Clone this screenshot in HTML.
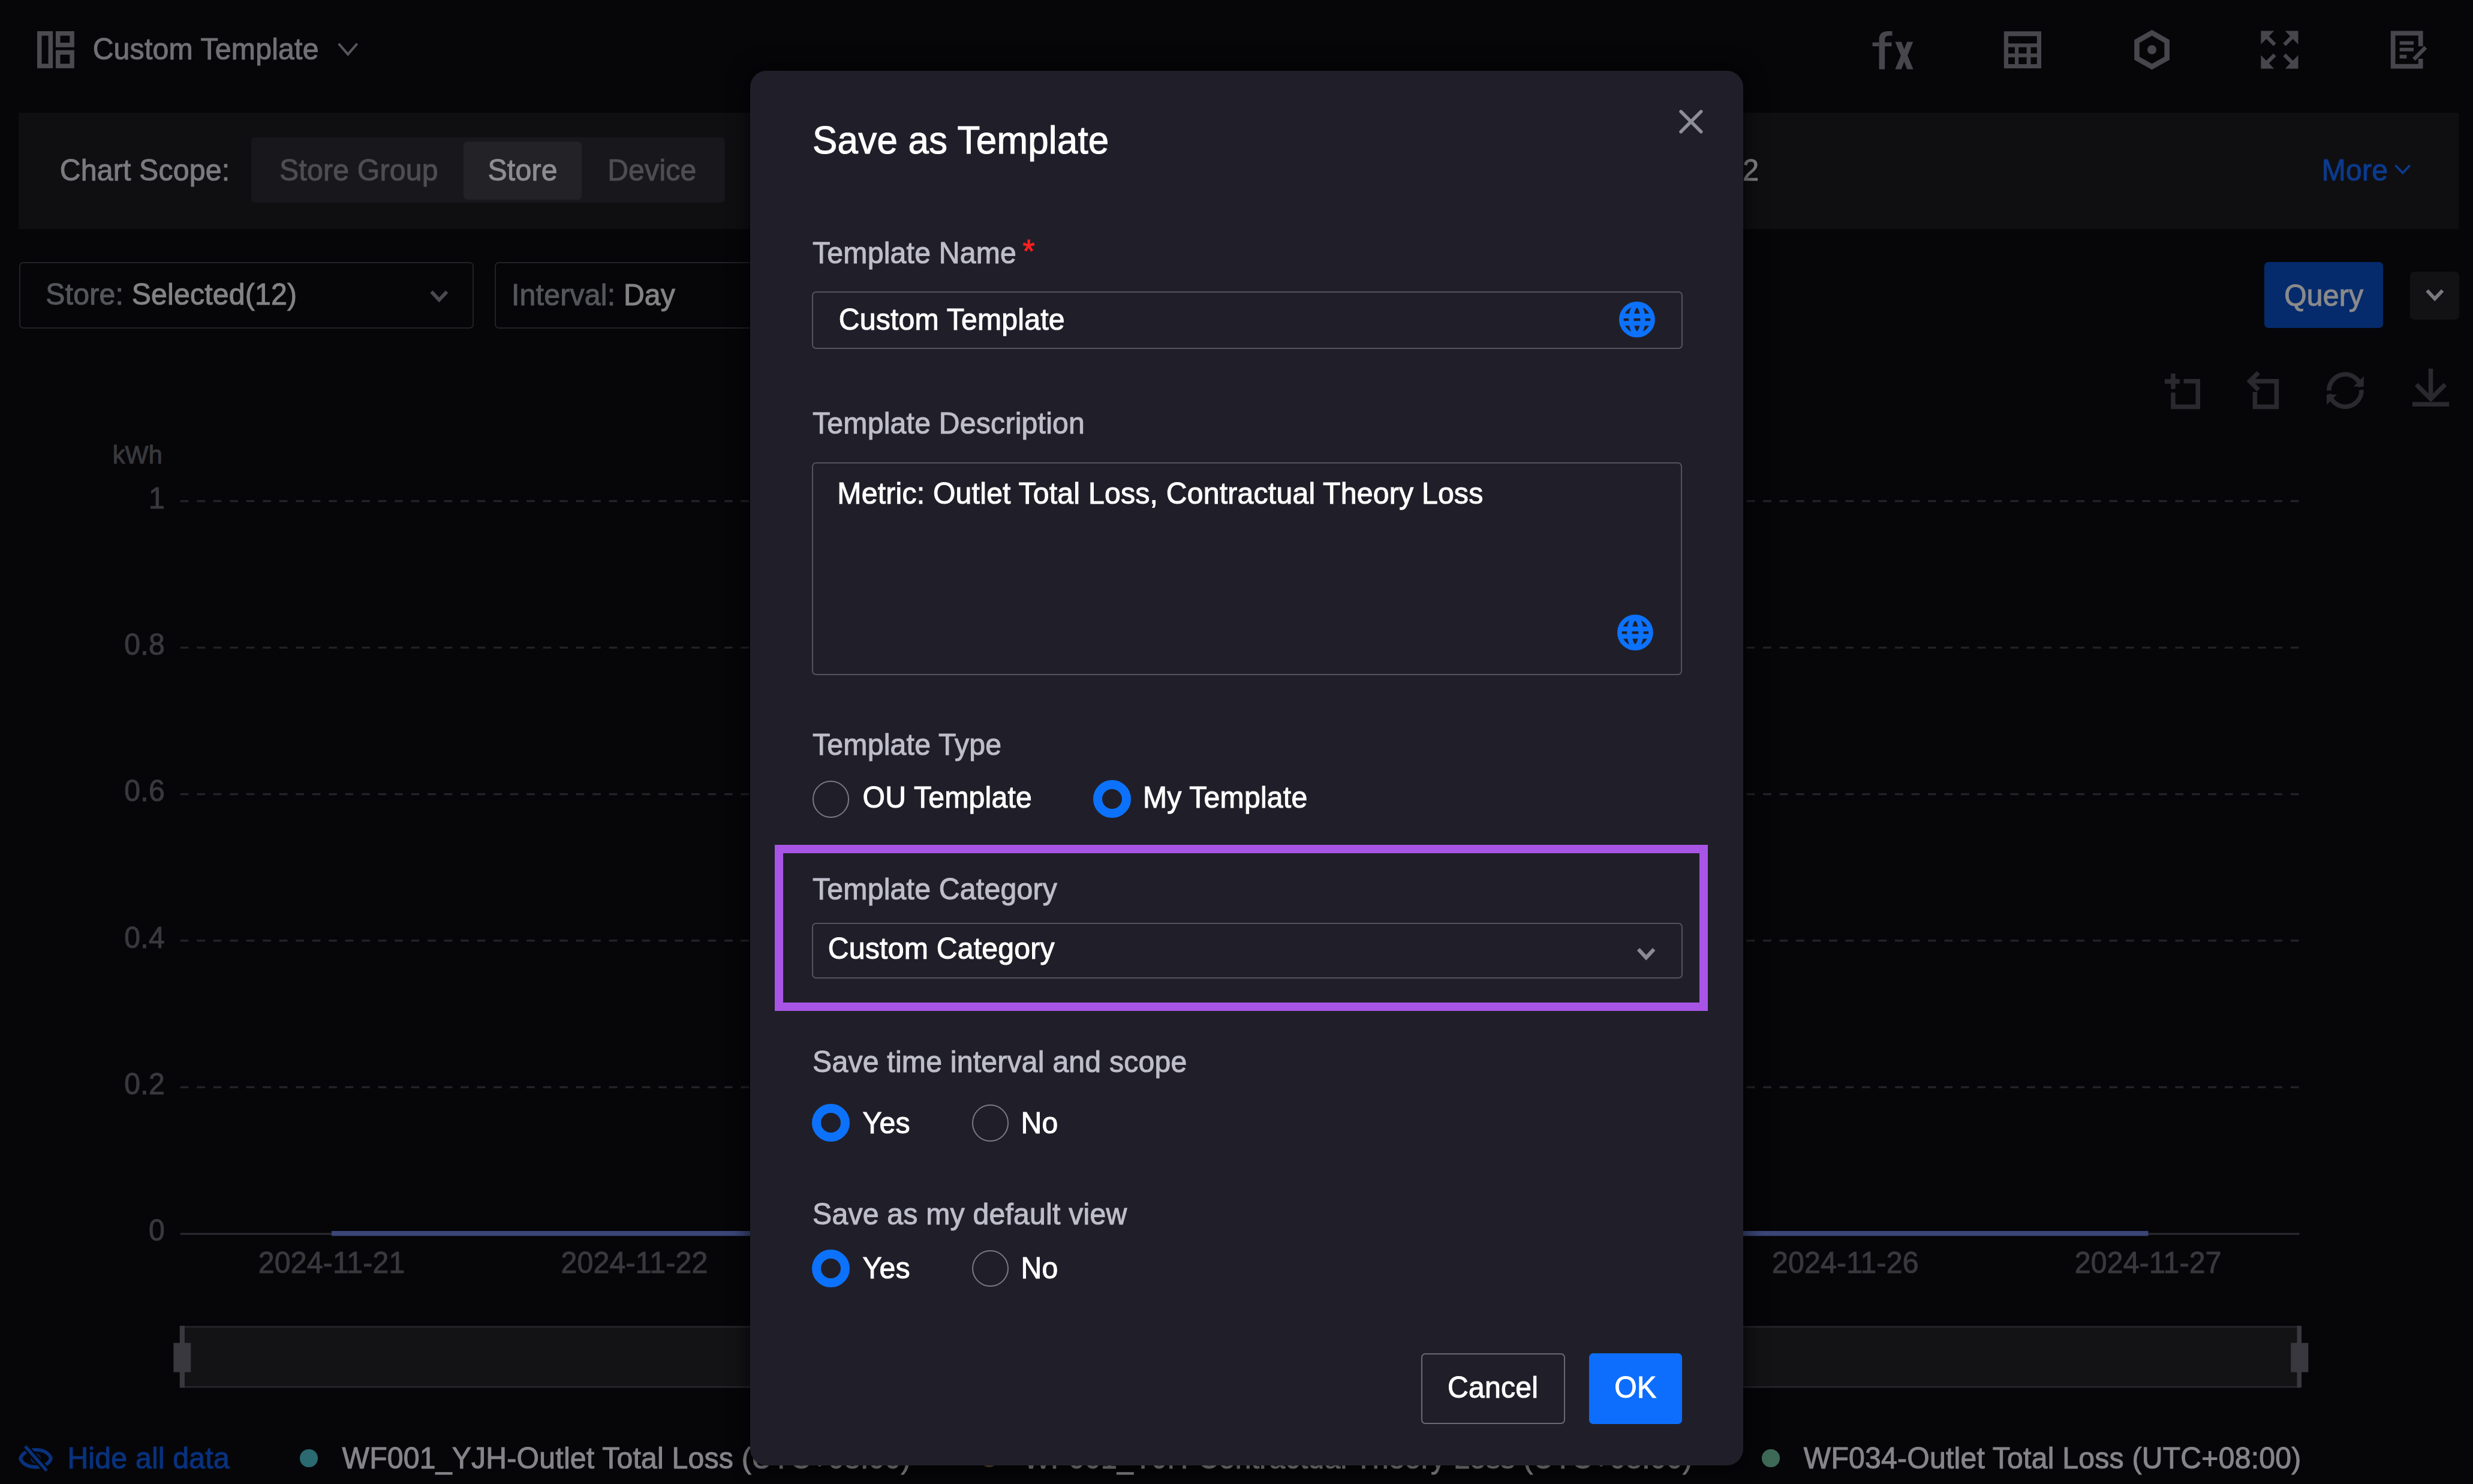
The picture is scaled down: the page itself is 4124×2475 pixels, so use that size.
<!DOCTYPE html>
<html><head><meta charset="utf-8">
<style>
html,body{margin:0;padding:0;background:#060609;overflow:hidden;width:4124px;height:2475px;}
#app{zoom:3.43667;position:relative;width:1200px;height:720px;overflow:hidden;background:#060609;font-family:"Liberation Sans",sans-serif;font-size:14px;line-height:14px;}
.a{position:absolute;white-space:nowrap;}
.t{transform:scaleY(1.05);transform-origin:0 0.8465em;-webkit-text-stroke:0.3px currentColor;letter-spacing:0.07px;}
svg{position:absolute;overflow:visible;}
</style></head>
<body><div id="app">

<!-- ===== Top bar ===== -->
<svg style="left:18px;top:15px" width="18" height="18" viewBox="0 0 18 18" fill="none" stroke="#4a4a4f" stroke-width="2.2">
  <rect x="1.1" y="1.1" width="5.4" height="15.8"/><rect x="10.1" y="1.1" width="6.8" height="5.6"/><rect x="10.1" y="10.3" width="6.8" height="6.6"/>
</svg>
<div class="a t" style="left:45px;top:16.9px;color:#707074">Custom Template</div>
<svg style="left:163.8px;top:20.4px" width="10" height="7" viewBox="0 0 10 7" fill="none" stroke="#55555a" stroke-width="1.2"><path d="M0.5 0.8 L5 6 L9.5 0.8"/></svg>

<!-- top-right icons -->

<!-- ===== Filter panel ===== -->
<div class="a" style="left:9px;top:54.6px;width:1184px;height:56.6px;background:#0f0f12"></div>
<div class="a t" style="left:29px;top:75.6px;color:#7b7b7f">Chart Scope:</div>
<div class="a" style="left:121.8px;top:66.6px;width:230px;height:31.8px;background:#18181c;border-radius:2px"></div>
<div class="a" style="left:225px;top:68.7px;width:57.3px;height:28.2px;background:#222227;border-radius:2px"></div>
<div class="a t" style="left:135.6px;top:75.6px;color:#4d4d52">Store Group</div>
<div class="a t" style="left:236.7px;top:75.6px;color:#8d8d91">Store</div>
<div class="a t" style="left:294.8px;top:75.6px;color:#4d4d52">Device</div>
<div class="a t" style="left:837.8px;top:75.6px;color:#848486">12</div>
<div class="a t" style="left:1126.6px;top:75.6px;color:#0c3a8c">More</div>
<svg style="left:1162px;top:79.7px" width="8" height="5" viewBox="0 0 8 5" fill="none" stroke="#0c3a8c" stroke-width="1.1"><path d="M0.5 0.5 L4 4.2 L7.5 0.5"/></svg>

<!-- ===== Selects row ===== -->
<div class="a" style="left:9.3px;top:127.3px;width:219.30px;height:30.90px;border:0.70px solid #222226;border-radius:2px"></div>
<div class="a t" style="left:22.2px;top:135.9px;color:#54565b">Store: <span style="color:#838384">Selected(12)</span></div>
<svg style="left:208.3px;top:140.4px" width="9.5" height="6.3" viewBox="0 0 9.5 6.3" fill="none" stroke="#4a4a4f" stroke-width="1.7"><path d="M1 1 L4.75 5 L8.5 1"/></svg>
<div class="a" style="left:240px;top:127.3px;width:200.60px;height:30.90px;border:0.70px solid #222226;border-radius:2px"></div>
<div class="a t" style="left:248.2px;top:136.1px;color:#54565b">Interval: <span style="color:#838384">Day</span></div>

<div class="a" style="left:1098.6px;top:127.3px;width:57.9px;height:31.9px;background:#052b6c;border-radius:2px"></div>
<div class="a t" style="left:1108.4px;top:136.6px;color:#8a8a8c">Query</div>
<div class="a" style="left:1169.5px;top:131.7px;width:23.7px;height:23.5px;background:#121215;border-radius:2px"></div>
<svg style="left:1176.6px;top:140px" width="9.5" height="6.3" viewBox="0 0 9.5 6.3" fill="none" stroke="#7a7a7e" stroke-width="1.7"><path d="M1 1 L4.75 5 L8.5 1"/></svg>

<!-- top-right icons -->
<svg style="left:0;top:0" width="1200" height="720" viewBox="0 0 1200 720">
 <g fill="#47464d">
  <!-- fx -->
  <path d="M911.8 33.6 V20.6 H908.6 V22.5 H911.8 Z"/>
  <path d="M911.8 33.6 H914.6 V22.5 H917.9 V20.6 H914.6 V19.2 Q914.6 17.3 916.4 17.3 H918.2 V15.1 H916.2 Q911.8 15.1 911.8 19.2 Z"/>
  <path d="M919.6 20.3 H922.6 L924 23.9 L925.4 20.3 H928.3 L925.6 26.9 L928.4 33.6 H925.4 L924 29.9 L922.6 33.6 H919.6 L922.4 26.9 Z"/>
  <!-- calculator -->
  <path fill-rule="evenodd" d="M972.4 15.2 H990.5 V33.2 H972.4 Z M974.5 17.5 V21.1 H988.4 V17.5 Z M974.5 22.9 V26 H977.7 V22.9 Z M979.5 22.9 V26 H983.4 V22.9 Z M985.4 22.9 V26 H988.4 V22.9 Z M974.5 27.8 V31.1 H977.7 V27.8 Z M979.5 27.8 V31.1 H983.4 V27.8 Z M985.4 27.8 V31.1 H988.4 V27.8 Z"/>
  <!-- hexagon dot -->
  <circle cx="1044.2" cy="24.1" r="2.2"/>
  <!-- expand arrows -->
  <path d="M1097.1 15 H1103.5 L1097.1 21.5 Z"/><path d="M1115.2 15 H1108.8 L1115.2 21.5 Z"/>
  <path d="M1097.1 33.3 H1103.5 L1097.1 26.8 Z"/><path d="M1115.2 33.3 H1108.8 L1115.2 26.8 Z"/>
  <!-- edit doc lines -->
  <rect x="1164.4" y="20" width="6.8" height="1.7"/>
  <rect x="1164.4" y="23.2" width="6.8" height="1.7"/>
  <rect x="1164.4" y="26.6" width="3.4" height="1.8"/>
 </g>
 <g fill="none" stroke="#47464d">
  <path stroke-width="2.5" d="M1044.2 15.9 L1051.5 20.1 V28.3 L1044.2 32.4 L1036.9 28.3 V20.1 Z"/>
  <path stroke-width="2.26" d="M1174.6 22.5 V16.1 H1161.2 V32.2 H1174.6 V28.5"/>
  <path stroke-width="1.9" d="M1171.3 28.8 L1177 23"/>
  <path stroke-width="1.85" d="M1099.3 17.2 L1103.8 21.7 M1113 17.2 L1108.5 21.7 M1099.3 31.1 L1103.8 26.6 M1113 31.1 L1108.5 26.6"/>
 </g>
 <!-- toolbar icons -->
 <g fill="none" stroke="#29292e" stroke-width="2.2">
  <path d="M1054.5 181.3 V188.8 M1050.4 185.1 H1057.7"/>
  <path d="M1059.6 185 H1066.5 V197.4 H1054.5 V190.5"/>
  <path d="M1091.5 185 H1104.7 V197.4 H1094.2 V190.2"/>
  <path d="M1095.9 180.8 L1091.7 185 L1095.9 189.2"/>
  <path d="M1130.1 189.6 A7.9 7.9 0 0 1 1145.7 187.8"/>
  <path d="M1145.9 189.2 A7.9 7.9 0 0 1 1130.3 191.2"/>
  <path d="M1179.5 178.9 V192.5 M1172.5 186.6 L1179.5 193.6 L1186.5 186.6"/>
  <path d="M1170.6 196.2 H1188.4"/>
 </g>
 <g fill="#29292e">
  <path d="M1147 182.6 V187.6 H1142 Z"/>
  <path d="M1129 196.4 V191.5 H1134 Z"/>
 </g>
</svg>

<!-- ===== Chart ===== -- -->
<div class="a t" style="left:54.6px;top:215px;font-size:12px;line-height:12px;color:#38383d">kWh</div>
<svg style="left:0;top:0" width="1200" height="720" viewBox="0 0 1200 720">
 <g stroke="#222227" stroke-width="1" stroke-dasharray="4 4">
  <path d="M87.5 243.2 H1115.8"/><path d="M87.5 314.3 H1115.8"/><path d="M87.5 385.4 H1115.8"/><path d="M87.5 456.5 H1115.8"/><path d="M87.5 527.6 H1115.8"/>
 </g>
 <path d="M87.5 598.8 H1115.8" stroke="#2a2a30" stroke-width="1"/>
 <path d="M160.9 598.6 H1042.4" stroke="#3b4677" stroke-width="2.4"/>
 <rect x="87.7" y="643.9" width="1027.8" height="29.2" fill="#131316" stroke="#26262b" stroke-width="0.8"/>
 <g fill="#38383e">
  <rect x="87.2" y="643.4" width="2.4" height="30"/><rect x="84.2" y="651.7" width="8.4" height="14.2"/>
  <rect x="1114.6" y="643.4" width="2.2" height="30"/><rect x="1111.6" y="651.7" width="8.5" height="14.2"/>
 </g>
</svg>
<div class="a t" style="right:1120.0px;top:234.85px;color:#38383d">1</div>
<div class="a t" style="right:1120.0px;top:305.90px;color:#38383d">0.8</div>
<div class="a t" style="right:1120.0px;top:376.95px;color:#38383d">0.6</div>
<div class="a t" style="right:1120.0px;top:448.00px;color:#38383d">0.4</div>
<div class="a t" style="right:1120.0px;top:519.05px;color:#38383d">0.2</div>
<div class="a t" style="right:1120.0px;top:590.10px;color:#38383d">0</div>
<div class="a t" style="left:160.95px;top:605.95px;width:0;display:flex;justify-content:center;color:#38383d"><span>2024-11-21</span></div>
<div class="a t" style="left:307.85px;top:605.95px;width:0;display:flex;justify-content:center;color:#38383d"><span>2024-11-22</span></div>
<div class="a t" style="left:454.75px;top:605.95px;width:0;display:flex;justify-content:center;color:#38383d"><span>2024-11-23</span></div>
<div class="a t" style="left:601.65px;top:605.95px;width:0;display:flex;justify-content:center;color:#38383d"><span>2024-11-24</span></div>
<div class="a t" style="left:748.55px;top:605.95px;width:0;display:flex;justify-content:center;color:#38383d"><span>2024-11-25</span></div>
<div class="a t" style="left:895.45px;top:605.95px;width:0;display:flex;justify-content:center;color:#38383d"><span>2024-11-26</span></div>
<div class="a t" style="left:1042.35px;top:605.95px;width:0;display:flex;justify-content:center;color:#38383d"><span>2024-11-27</span></div>
<!-- legend -->
<svg style="left:8.9px;top:701.4px" width="16.6" height="13" viewBox="0 0 16.6 13" fill="none">
 <path d="M0.9 6.5 C2.6 0.9 14 0.9 15.7 6.5 C14 12.1 2.6 12.1 0.9 6.5 Z" stroke="#08327e" stroke-width="1.7"/>
 <circle cx="8.3" cy="6.5" r="2.1" stroke="#08327e" stroke-width="0.9" opacity="0.6"/>
 <path d="M3.2 0.6 L13.6 12.4" stroke="#060609" stroke-width="3.2"/>
 <path d="M3.2 0.6 L13.6 12.4" stroke="#08327e" stroke-width="1.5"/>
</svg>
<div class="a t" style="left:32.7px;top:700.65px;color:#08327e">Hide all data</div>
<div class="a" style="left:145.6px;top:703.4px;width:8.6px;height:8.6px;border-radius:50%;background:#2a6a70"></div>
<div class="a t" style="left:166px;top:700.65px;color:#858589">WF001_YJH-Outlet Total Loss (UTC+08:00)</div>
<div class="a" style="left:475.7px;top:703.4px;width:8.6px;height:8.6px;border-radius:50%;background:#6a4a2c"></div>
<div class="a t" style="left:496.6px;top:700.65px;color:#858589">WF001_YJH-Contractual Theory Loss (UTC+08:00)</div>
<div class="a" style="left:854.9px;top:703.4px;width:8.6px;height:8.6px;border-radius:50%;background:#3d6a57"></div>
<div class="a t" style="left:875.2px;top:700.65px;color:#858589">WF034-Outlet Total Loss (UTC+08:00)</div>

<!-- ===== Modal ===== -->
<div class="a" style="left:363.9px;top:34.4px;width:481.95px;height:676.85px;background:#201f29;border-radius:8px;box-shadow:0 0 9px 2px rgba(0,0,0,0.55)"></div>
<svg style="left:815px;top:53.6px" width="11" height="11" viewBox="0 0 11 11" fill="none" stroke="#8e8d9a" stroke-width="1.6" stroke-linecap="round"><path d="M0.6 0.6 L10.4 10.4 M10.4 0.6 L0.6 10.4"/></svg>
<div class="a t" style="left:394.30px;top:59.46px;font-size:18px;line-height:18px;color:#ffffff;">Save as Template</div>
<div class="a t" style="left:394.30px;top:115.95px;color:#bebdca;">Template Name</div>
<div class="a t" style="left:496.3px;top:114.6px;color:#ff1f1f;font-size:15px;line-height:15px">*</div>
<div class="a" style="left:394px;top:141.4px;width:421.40px;height:26.70px;border:0.70px solid #54535e;border-radius:2px"></div>
<div class="a t" style="left:407.00px;top:148.15px;color:#ffffff;">Custom Template</div>
<svg style="left:785.60px;top:146.30px" width="17.4" height="17.4" viewBox="0 0 17.4 17.4"><g fill="none" stroke="#0c72fb">
 <circle cx="8.7" cy="8.7" r="7.6" stroke-width="2.2"/><ellipse cx="8.7" cy="8.7" rx="2.8" ry="6.9" stroke-width="2.4"/>
 <path d="M1.2 7.0 H16.2 M1.2 10.55 H16.2" stroke-width="2.3"/></g></svg>
<div class="a t" style="left:394.30px;top:198.35px;color:#bebdca;">Template Description</div>
<div class="a" style="left:394px;top:224.3px;width:421.00px;height:102.30px;border:0.70px solid #54535e;border-radius:2px"></div>
<div class="a t" style="left:406.30px;top:232.55px;color:#ffffff;">Metric: Outlet Total Loss, Contractual Theory Loss</div>
<svg style="left:784.85px;top:298.30px" width="17.4" height="17.4" viewBox="0 0 17.4 17.4"><g fill="none" stroke="#0c72fb">
 <circle cx="8.7" cy="8.7" r="7.6" stroke-width="2.2"/><ellipse cx="8.7" cy="8.7" rx="2.8" ry="6.9" stroke-width="2.4"/>
 <path d="M1.2 7.0 H16.2 M1.2 10.55 H16.2" stroke-width="2.3"/></g></svg>
<div class="a t" style="left:394.30px;top:354.45px;color:#bebdca;">Template Type</div>
<div class="a" style="left:394.15px;top:378.85px;width:16.8px;height:16.8px;border:0.6px solid #7a7984;border-radius:50%"></div>
<div class="a t" style="left:418.60px;top:380.15px;color:#ffffff;">OU Template</div>
<div class="a" style="left:530.45px;top:378.55px;width:9.6px;height:9.6px;border:4.5px solid #0c72fb;border-radius:50%"></div>
<div class="a t" style="left:554.60px;top:380.15px;color:#ffffff;">My Template</div>
<div class="a" style="left:375.95px;top:410px;width:452.8px;height:80.6px;background:#a855e6"></div><div class="a" style="left:380.03px;top:414.07px;width:444.6px;height:72.4px;background:#201f29"></div>
<div class="a t" style="left:394.30px;top:424.65px;color:#bebdca;">Template Category</div>
<div class="a" style="left:394px;top:447.8px;width:421.40px;height:26.00px;border:0.70px solid #54535e;border-radius:2px"></div>
<div class="a t" style="left:401.80px;top:453.25px;color:#ffffff;">Custom Category</div>
<svg style="left:794px;top:459.7px" width="9.4" height="6.6" viewBox="0 0 9.4 6.6" fill="none" stroke="#8b8a95" stroke-width="1.8"><path d="M0.9 0.9 L4.7 5 L8.5 0.9"/></svg>
<div class="a t" style="left:394.30px;top:508.25px;color:#bebdca;">Save time interval and scope</div>
<div class="a" style="left:393.85px;top:535.70px;width:9.6px;height:9.6px;border:4.5px solid #0c72fb;border-radius:50%"></div>
<div class="a t" style="left:418.60px;top:538.15px;color:#ffffff;">Yes</div>
<div class="a" style="left:471.55px;top:536.00px;width:16.8px;height:16.8px;border:0.6px solid #7a7984;border-radius:50%"></div>
<div class="a t" style="left:495.40px;top:538.15px;color:#ffffff;">No</div>
<div class="a t" style="left:394.30px;top:582.15px;color:#bebdca;">Save as my default view</div>
<div class="a" style="left:393.85px;top:606.30px;width:9.6px;height:9.6px;border:4.5px solid #0c72fb;border-radius:50%"></div>
<div class="a t" style="left:418.60px;top:608.35px;color:#ffffff;">Yes</div>
<div class="a" style="left:471.55px;top:606.60px;width:16.8px;height:16.8px;border:0.6px solid #7a7984;border-radius:50%"></div>
<div class="a t" style="left:495.40px;top:608.35px;color:#ffffff;">No</div>
<div class="a" style="left:689.6px;top:656.7px;width:68.80px;height:33.10px;border:0.65px solid #6a6974;border-radius:2px"></div>
<div class="a t" style="left:702.40px;top:666.25px;color:#ffffff;">Cancel</div>
<div class="a" style="left:771.1px;top:656.7px;width:45px;height:34.4px;background:#0d6efd;border-radius:2px"></div>
<div class="a t" style="left:783.40px;top:666.25px;color:#ffffff;">OK</div>

</div></body></html>
